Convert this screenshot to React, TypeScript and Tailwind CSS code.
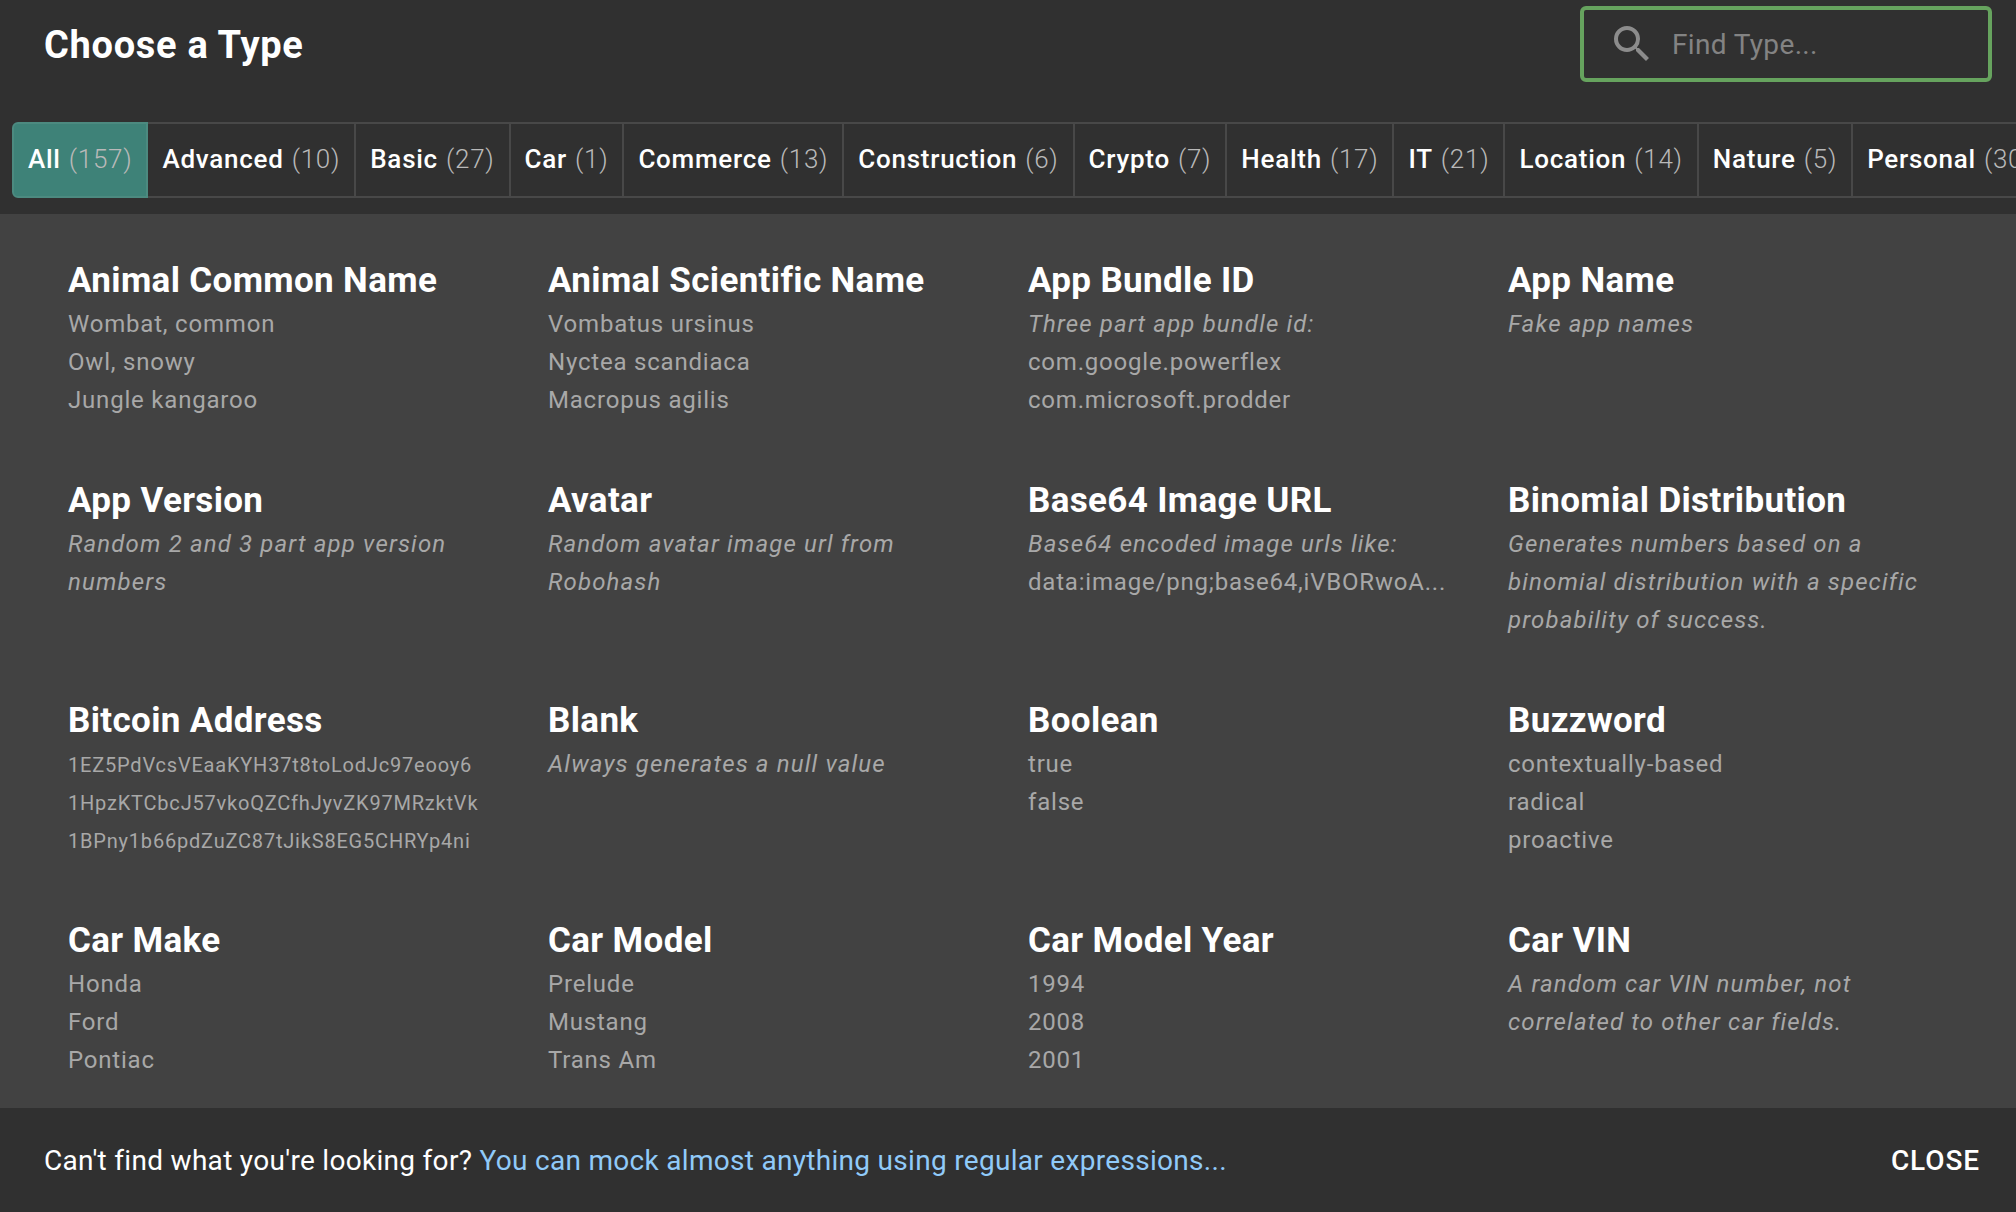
import React from "react";

const tabs: [string, string][] = [
  ["All", "(157)"], ["Advanced", "(10)"], ["Basic", "(27)"], ["Car", "(1)"], ["Commerce", "(13)"], ["Construction", "(6)"],
  ["Crypto", "(7)"], ["Health", "(17)"], ["IT", "(21)"], ["Location", "(14)"], ["Nature", "(5)"], ["Personal", "(30)"],
];

type Item = { t: string; d?: string; s?: string[]; small?: boolean };
const items: Item[] = [
  { t: "Animal Common Name", s: ["Wombat, common", "Owl, snowy", "Jungle kangaroo"] },
  { t: "Animal Scientific Name", s: ["Vombatus ursinus", "Nyctea scandiaca", "Macropus agilis"] },
  { t: "App Bundle ID", d: "Three part app bundle id:", s: ["com.google.powerflex", "com.microsoft.prodder"] },
  { t: "App Name", d: "Fake app names" },
  { t: "App Version", d: "Random 2 and 3 part app version numbers" },
  { t: "Avatar", d: "Random avatar image url from Robohash" },
  { t: "Base64 Image URL", d: "Base64 encoded image urls like:", s: ["data:image/png;base64,iVBORwoA..."] },
  { t: "Binomial Distribution", d: "Generates numbers based on a binomial distribution with a specific probability of success." },
  { t: "Bitcoin Address", small: true, s: ["1EZ5PdVcsVEaaKYH37t8toLodJc97eooy6", "1HpzKTCbcJ57vkoQZCfhJyvZK97MRzktVk", "1BPny1b66pdZuZC87tJikS8EG5CHRYp4ni"] },
  { t: "Blank", d: "Always generates a null value" },
  { t: "Boolean", s: ["true", "false"] },
  { t: "Buzzword", s: ["contextually-based", "radical", "proactive"] },
  { t: "Car Make", s: ["Honda", "Ford", "Pontiac"] },
  { t: "Car Model", s: ["Prelude", "Mustang", "Trans Am"] },
  { t: "Car Model Year", s: ["1994", "2008", "2001"] },
  { t: "Car VIN", d: "A random car VIN number, not correlated to other car fields." },
];

export default function App() {
  return (
    <div className="flex h-[1212px] w-[2016px] flex-col overflow-hidden bg-[#303030] text-white [font-family:Roboto,sans-serif]">
      <header className="h-[214px] shrink-0">
        <div className="flex h-[122px] items-start justify-between pl-[44px] pr-[24px] pt-[6px]">
          <h1 className="mt-[16px] text-[38px] leading-[46px] font-bold tracking-[0.7px]">Choose a Type</h1>
          <div className="flex h-[76px] w-[412px] items-center rounded-[6px] border-[4px] border-[#66a35e] pl-[24px]">
            <svg viewBox="0 0 24 24" className="h-[48px] w-[48px] fill-[#8c8c8c]">
              <path d="M15.5 14h-.79l-.28-.27A6.471 6.471 0 0 0 16 9.5 6.5 6.5 0 1 0 9.5 16c1.61 0 3.09-.59 4.23-1.57l.27.28v.79l5 4.99L20.49 19l-4.99-5zm-6 0C7.01 14 5 11.99 5 9.5S7.01 5 9.5 5 14 7.01 14 9.5 11.99 14 9.5 14z" />
            </svg>
            <span className="ml-[16px] mt-[2px] text-[28px] tracking-[0.35px] text-[#838383]">Find Type...</span>
          </div>
        </div>
        <div className="ml-[12px] flex h-[76px] overflow-hidden">
          {tabs.map(([n, c], i) => (
            <div
              key={n}
              className={
                i === 0
                  ? "flex shrink-0 items-center rounded-l-[6px] border-[2px] border-[#4c8a80] bg-[#3e8278] pb-[1px] pl-[14px] pr-[14px] text-[26px] tracking-[0.74px]"
                  : "flex shrink-0 items-center border-y-[2px] border-r-[2px] border-[#484848] px-[14px] pb-[1px] text-[26px] tracking-[0.74px]"
              }
            >
              <span className="font-medium">{n}</span>
              <span className="ml-[8px] font-light text-[#b9b9b9]">{c}</span>
            </div>
          ))}
        </div>
      </header>
      <main className="grid flex-1 grid-cols-[480px_480px_480px_480px] grid-rows-[220px_220px_220px_220px] overflow-hidden bg-[#424242] pl-[68px] pt-[44px]">
        {items.map((it) => (
          <div key={it.t} className="pr-[48px]">
            <div className="mb-[2px] pt-[1px] text-[35px] leading-[44px] font-bold tracking-[0.35px]">{it.t}</div>
            {it.d && <div className="text-[24px] leading-[38px] tracking-[1.15px] text-[#a8a8a8] italic">{it.d}</div>}
            <div className={it.small ? "pt-[1px]" : ""}>
              {it.s?.map((l) => (
                <div key={l} className={(it.small ? "text-[20px] " : "text-[24px] ") + "whitespace-nowrap leading-[38px] tracking-[0.8px] text-[#a8a8a8]"}>
                  {l}
                </div>
              ))}
            </div>
          </div>
        ))}
      </main>
      <footer className="flex h-[104px] shrink-0 items-center justify-between pl-[44px] pr-[36px] pt-[2px] text-[28px] tracking-[0.3px]">
        <div>
          Can't find what you're looking for? <span className="text-[#90caf9]">You can mock almost anything using regular expressions...</span>
        </div>
        <div className="font-medium tracking-[0.9px]">CLOSE</div>
      </footer>
    </div>
  );
}
